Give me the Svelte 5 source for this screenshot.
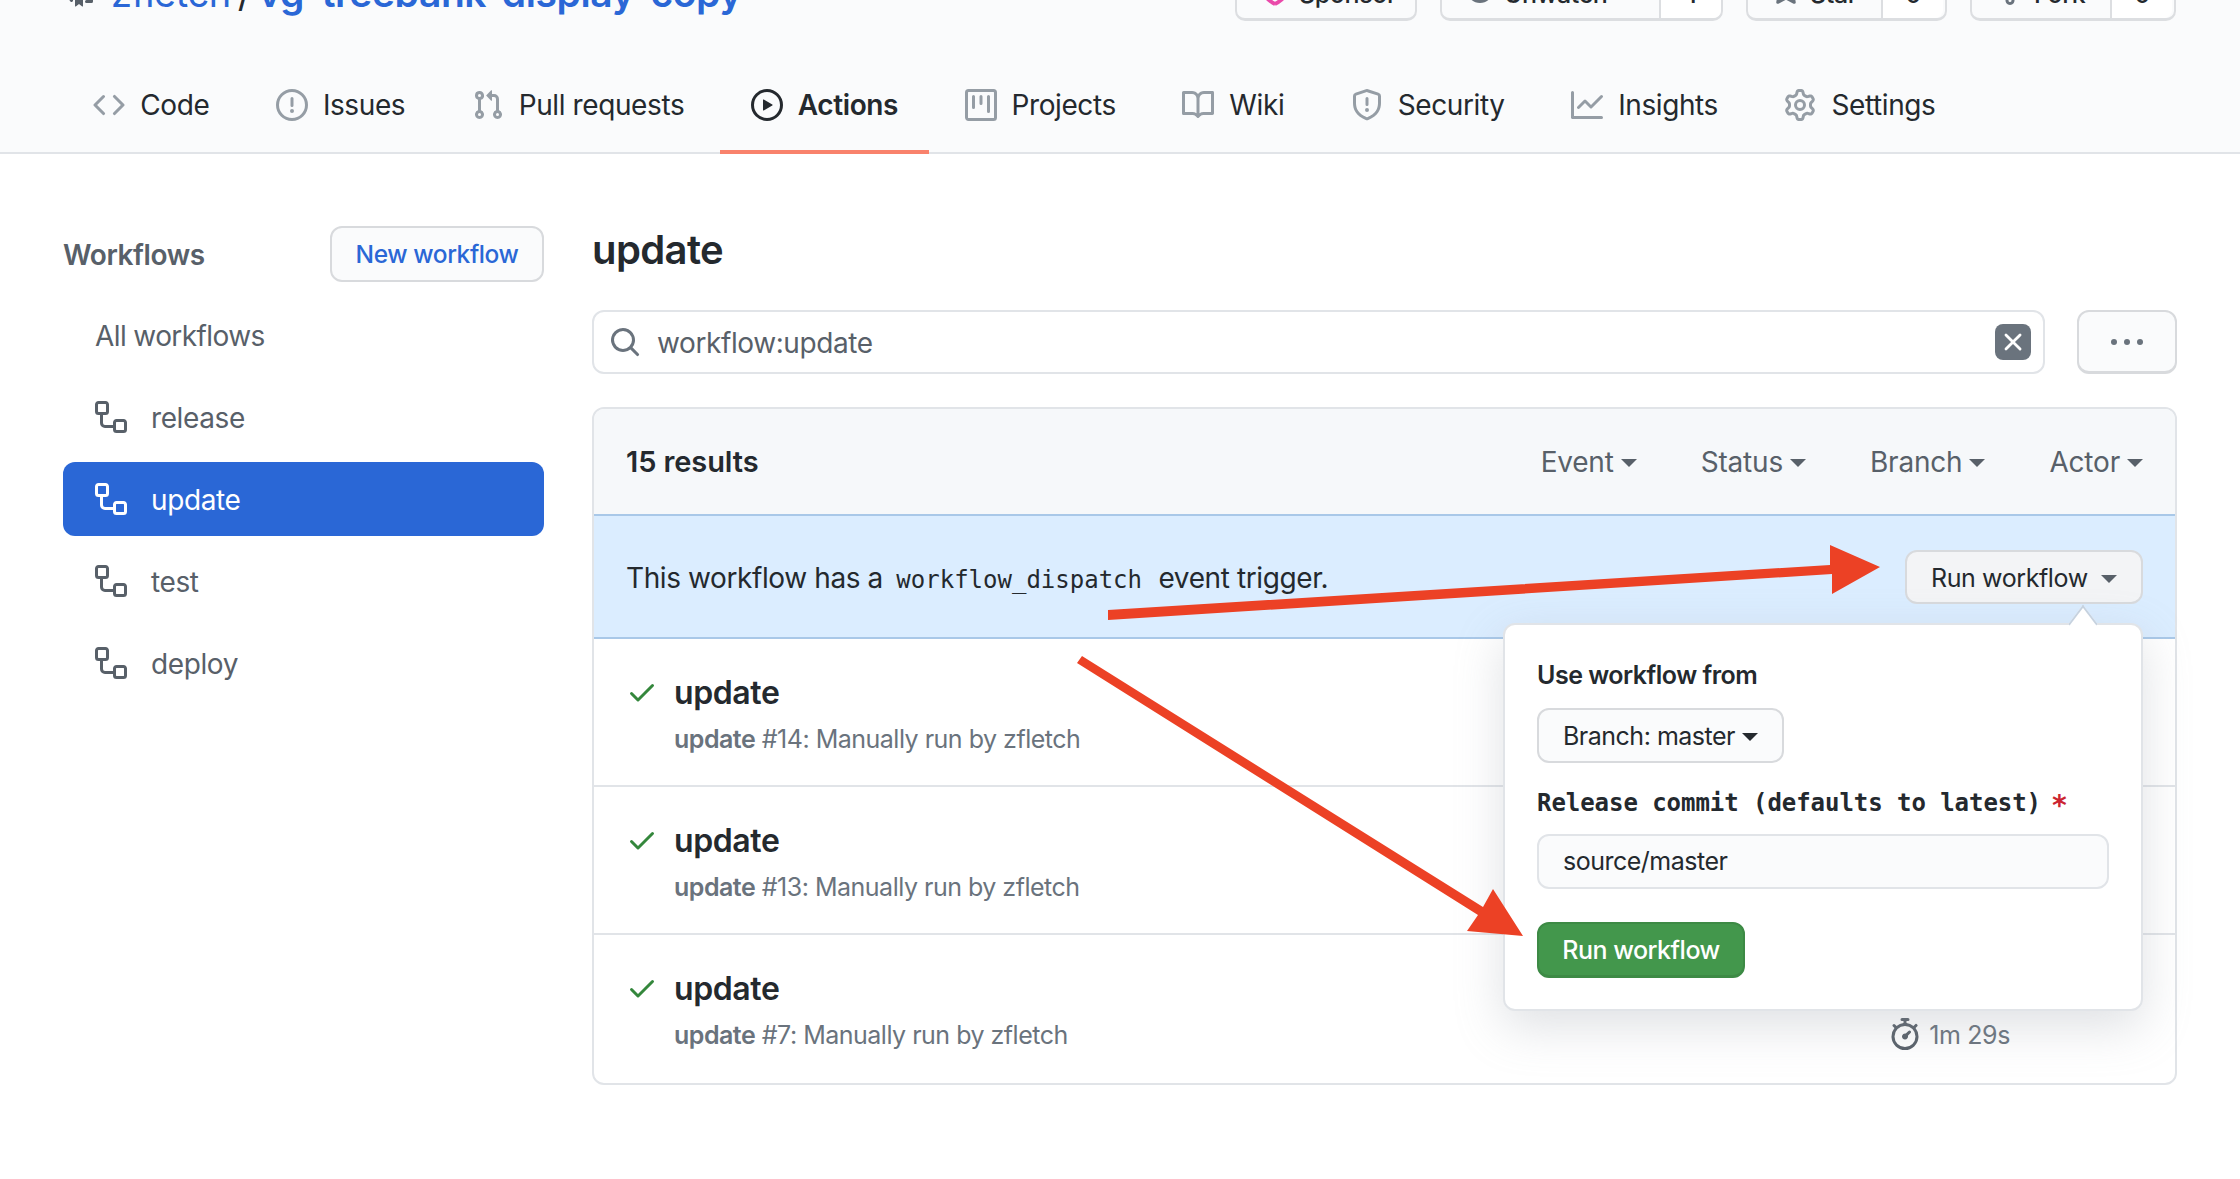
<script>
	const icons = {
		code: 'M4.72 3.22a.75.75 0 011.06 1.06L2.06 8l3.72 3.72a.75.75 0 11-1.06 1.06L.47 8.53a.75.75 0 010-1.06l4.25-4.25zm6.56 0a.75.75 0 10-1.06 1.06L13.94 8l-3.72 3.72a.75.75 0 101.06 1.06l4.25-4.25a.75.75 0 000-1.06l-4.25-4.25z',
		issue: 'M8 1.5a6.5 6.5 0 100 13 6.5 6.5 0 000-13zM0 8a8 8 0 1116 0A8 8 0 010 8zm9 3a1 1 0 11-2 0 1 1 0 012 0zm-.25-6.25a.75.75 0 00-1.5 0v3.5a.75.75 0 001.5 0v-3.5z',
		pull: 'M7.177 3.073L9.573.677A.25.25 0 0110 .854v4.792a.25.25 0 01-.427.177L7.177 3.427a.25.25 0 010-.354zM3.75 2.5a.75.75 0 100 1.5.75.75 0 000-1.5zm-2.25.75a2.25 2.25 0 113 2.122v5.256a2.251 2.251 0 11-1.5 0V5.372A2.25 2.25 0 011.5 3.25zM11 2.5h-1V4h1a1 1 0 011 1v5.628a2.251 2.251 0 101.5 0V5A2.5 2.5 0 0011 2.5zm1 10.25a.75.75 0 111.5 0 .75.75 0 01-1.5 0zM3.75 12a.75.75 0 100 1.5.75.75 0 000-1.5z',
		play: 'M1.5 8a6.5 6.5 0 1113 0 6.5 6.5 0 01-13 0zM8 0a8 8 0 100 16A8 8 0 008 0zM6.379 5.227A.25.25 0 006 5.442v5.117a.25.25 0 00.379.214l4.264-2.559a.25.25 0 000-.428L6.379 5.227z',
		project: 'M1.75 0A1.75 1.75 0 000 1.75v12.5C0 15.216.784 16 1.75 16h12.5A1.75 1.75 0 0016 14.25V1.75A1.75 1.75 0 0014.25 0H1.75zM1.5 1.75a.25.25 0 01.25-.25h12.5a.25.25 0 01.25.25v12.5a.25.25 0 01-.25.25H1.75a.25.25 0 01-.25-.25V1.75zM11.75 3a.75.75 0 00-.75.75v7.5a.75.75 0 001.5 0v-7.5a.75.75 0 00-.75-.75zm-8.25.75a.75.75 0 011.5 0v5.5a.75.75 0 01-1.5 0v-5.5zM8 3a.75.75 0 00-.75.75v3.5a.75.75 0 001.5 0v-3.5A.75.75 0 008 3z',
		book: 'M0 1.75A.75.75 0 01.75 1h4.253c1.227 0 2.317.59 3 1.501A3.744 3.744 0 0111.006 1h4.245a.75.75 0 01.75.75v10.5a.75.75 0 01-.75.75h-4.507a2.25 2.25 0 00-1.591.659l-.622.621a.75.75 0 01-1.06 0l-.622-.621A2.25 2.25 0 005.258 13H.75a.75.75 0 01-.75-.75V1.75zm8.755 3a2.25 2.25 0 012.25-2.25H14.5v9h-3.757c-.71 0-1.4.201-1.992.572l.004-7.322zm-1.504 7.324l.004-5.073-.002-2.253A2.25 2.25 0 005.003 2.5H1.5v9h3.757a3.75 3.75 0 011.994.574z',
		shield: 'M7.467.133a1.75 1.75 0 011.066 0l5.25 1.68A1.75 1.75 0 0115 3.48V7c0 1.566-.32 3.182-1.303 4.682-.983 1.498-2.585 2.813-5.032 3.855a1.7 1.7 0 01-1.33 0c-2.447-1.042-4.049-2.357-5.032-3.855C1.32 10.182 1 8.566 1 7V3.48a1.75 1.75 0 011.217-1.667l5.25-1.68zm.61 1.429a.25.25 0 00-.153 0l-5.25 1.68a.25.25 0 00-.174.238V7c0 1.358.275 2.666 1.057 3.86.784 1.194 2.121 2.34 4.366 3.297a.2.2 0 00.154 0c2.245-.956 3.582-2.104 4.366-3.298C13.225 9.666 13.5 8.36 13.5 7V3.48a.25.25 0 00-.174-.237l-5.25-1.68zM9 10.5a1 1 0 11-2 0 1 1 0 012 0zm-.25-5.75a.75.75 0 10-1.5 0v3a.75.75 0 001.5 0v-3z',
		graph: 'M1.5 1.75a.75.75 0 00-1.5 0v12.5c0 .414.336.75.75.75h14.5a.75.75 0 000-1.5H1.5V1.75zm14.28 2.53a.75.75 0 00-1.06-1.06L10 7.94 7.53 5.47a.75.75 0 00-1.06 0L3.22 8.72a.75.75 0 001.06 1.06L7 7.06l2.47 2.47a.75.75 0 001.06 0l5.25-5.25z',
		gear: 'M7.429 1.525a6.593 6.593 0 011.142 0c.036.003.108.036.137.146l.289 1.105c.147.56.55.967.997 1.189.174.086.341.183.501.29.417.278.97.423 1.53.27l1.102-.303c.11-.03.175.016.195.046.219.31.41.641.573.989.014.031.022.11-.059.19l-.815.806c-.411.406-.562.957-.53 1.456a4.588 4.588 0 010 .582c-.032.499.119 1.05.53 1.456l.815.806c.08.08.073.159.059.19a6.494 6.494 0 01-.573.99c-.02.029-.086.074-.195.045l-1.103-.303c-.559-.153-1.112-.008-1.529.27-.16.107-.327.204-.5.29-.449.222-.851.628-.998 1.189l-.289 1.105c-.029.11-.101.143-.137.146a6.613 6.613 0 01-1.142 0c-.036-.003-.108-.037-.137-.146l-.289-1.105c-.147-.56-.55-.967-.997-1.189a4.502 4.502 0 01-.501-.29c-.417-.278-.97-.423-1.53-.27l-1.102.303c-.11.03-.175-.016-.195-.046a6.492 6.492 0 01-.573-.989c-.014-.031-.022-.11.059-.19l.815-.806c.411-.406.562-.957.53-1.456a4.587 4.587 0 010-.582c.032-.499-.119-1.05-.53-1.456l-.815-.806c-.08-.08-.073-.159-.059-.19a6.44 6.44 0 01.573-.99c.02-.029.086-.075.195-.045l1.103.303c.559.153 1.112.008 1.529-.27.16-.107.327-.204.5-.29.449-.222.851-.628.998-1.189l.289-1.105c.029-.11.101-.143.137-.146zM8 0c-.236 0-.47.01-.701.03-.743.065-1.29.615-1.458 1.261l-.29 1.106c-.017.066-.078.158-.211.224a5.994 5.994 0 00-.668.386c-.123.082-.233.09-.3.071L3.27 2.776c-.644-.177-1.392.02-1.82.63a7.977 7.977 0 00-.704 1.217c-.315.675-.111 1.422.363 1.891l.815.806c.05.048.098.147.088.294a6.084 6.084 0 000 .772c.01.147-.038.246-.088.294l-.815.806c-.474.469-.678 1.216-.363 1.891.2.428.436.835.704 1.218.428.609 1.176.806 1.82.63l1.103-.303c.066-.019.176-.011.299.071.213.143.436.272.668.386.133.066.194.158.212.224l.289 1.106c.169.646.715 1.196 1.458 1.26a8.094 8.094 0 001.402 0c.743-.064 1.29-.614 1.458-1.26l.29-1.106c.017-.066.078-.158.211-.224a5.98 5.98 0 00.668-.386c.123-.082.233-.09.3-.071l1.102.302c.644.177 1.392-.02 1.82-.63.268-.382.505-.789.704-1.217.315-.675.111-1.422-.364-1.891l-.814-.806c-.05-.048-.098-.147-.088-.294a6.1 6.1 0 000-.772c-.01-.147.039-.246.088-.294l.814-.806c.475-.469.679-1.216.364-1.891a7.992 7.992 0 00-.704-1.218c-.428-.609-1.176-.806-1.82-.63l-1.103.303c-.066.019-.176.011-.299-.071a5.991 5.991 0 00-.668-.386c-.133-.066-.194-.158-.212-.224L10.16 1.29C9.99.645 9.444.095 8.701.031A8.094 8.094 0 008 0zm1.5 8a1.5 1.5 0 11-3 0 1.5 1.5 0 013 0zM11 8a3 3 0 11-6 0 3 3 0 016 0z',
		workflow: 'M0 1.75C0 .784.784 0 1.75 0h3.5C6.216 0 7 .784 7 1.75v3.5A1.75 1.75 0 015.25 7H4v4a1 1 0 001 1h4v-1.25C9 9.784 9.784 9 10.75 9h3.5c.966 0 1.75.784 1.75 1.75v3.5A1.75 1.75 0 0114.25 16h-3.5A1.75 1.75 0 019 14.25V13.5H5A2.5 2.5 0 012.5 11V7H1.75A1.75 1.75 0 010 5.25v-3.5zm1.75-.25a.25.25 0 00-.25.25v3.5c0 .138.112.25.25.25h3.5a.25.25 0 00.25-.25v-3.5a.25.25 0 00-.25-.25h-3.5zm9 9a.25.25 0 00-.25.25v3.5c0 .138.112.25.25.25h3.5a.25.25 0 00.25-.25v-3.5a.25.25 0 00-.25-.25h-3.5z',
		check: 'M13.78 4.22a.75.75 0 010 1.06l-7.25 7.25a.75.75 0 01-1.06 0L2.22 9.28a.75.75 0 011.06-1.06L6 10.94l6.72-6.72a.75.75 0 011.06 0z',
		search: 'M11.5 7a4.499 4.499 0 11-8.998 0A4.499 4.499 0 0111.5 7zm-.82 4.74a6 6 0 111.06-1.06l3.04 3.04a.75.75 0 11-1.06 1.06l-3.04-3.04z',
		stopwatch: 'M5.75.75A.75.75 0 016.5 0h3a.75.75 0 010 1.5h-.75v1l-.001.041a6.718 6.718 0 013.464 1.435l.007-.006.75-.75a.75.75 0 111.06 1.06l-.75.75-.006.007a6.75 6.75 0 11-10.548 0L2.72 5.03l-.75-.75a.75.75 0 011.06-1.06l.75.75.007.006A6.718 6.718 0 017.25 2.541a.756.756 0 010-.041v-1H6.5a.75.75 0 01-.75-.75zM8 14.5A5.25 5.25 0 108 4a5.25 5.25 0 000 10.5zm.389-6.7l1.33-1.33a.75.75 0 111.061 1.06L9.45 8.861A1.502 1.502 0 018 10.75a1.5 1.5 0 11.389-2.95z',
		star: 'M8 .25a.75.75 0 01.673.418l1.882 3.815 4.21.612a.75.75 0 01.416 1.279l-3.046 2.97.719 4.192a.75.75 0 01-1.088.791L8 12.347l-3.766 1.98a.75.75 0 01-1.088-.79l.72-4.194L.818 6.374a.75.75 0 01.416-1.28l4.21-.611L7.327.668A.75.75 0 018 .25zm0 2.445L6.615 5.5a.75.75 0 01-.564.41l-3.097.45 2.24 2.184a.75.75 0 01.216.664l-.528 3.084 2.769-1.456a.75.75 0 01.698 0l2.77 1.456-.53-3.084a.75.75 0 01.216-.664l2.24-2.183-3.096-.45a.75.75 0 01-.564-.41L8 2.694v.001z',
		repo: 'M2 2.5A2.5 2.5 0 014.5 0h8.75a.75.75 0 01.75.75v12.5a.75.75 0 01-.75.75h-2.5a.75.75 0 110-1.5h1.75v-2h-8a1 1 0 00-.714 1.7.75.75 0 01-1.072 1.05A2.495 2.495 0 012 11.5v-9zm10.5-1V9h-8c-.356 0-.694.074-1 .208V2.5a1 1 0 011-1h8zM5 12.25v3.25a.25.25 0 00.4.2l1.45-1.087a.25.25 0 01.3 0L8.6 15.7a.25.25 0 00.4-.2v-3.25a.25.25 0 00-.25-.25h-3.5a.25.25 0 00-.25.25z',
		x: 'M3.72 3.72a.75.75 0 011.06 0L8 6.94l3.22-3.22a.75.75 0 111.06 1.06L9.06 8l3.22 3.22a.75.75 0 11-1.06 1.06L8 9.06l-3.22 3.22a.75.75 0 01-1.06-1.06L6.94 8 3.72 4.78a.75.75 0 010-1.06z',
		heart: 'M4.25 2.5c-1.336 0-2.75 1.164-2.75 3 0 2.15 1.58 4.144 3.365 5.682A20.565 20.565 0 008 13.393a20.561 20.561 0 003.135-2.211C12.92 9.644 14.5 7.65 14.5 5.5c0-1.836-1.414-3-2.75-3-1.373 0-2.609.986-3.029 2.456a.75.75 0 01-1.442 0C6.859 3.486 5.623 2.5 4.25 2.5zM8 14.75l-.345.666-.002-.001-.006-.003-.018-.01a7.643 7.643 0 01-.31-.17 22.075 22.075 0 01-3.434-2.414C2.045 11.15 0 8.731 0 5.5 0 2.836 2.086 1 4.25 1 5.797 1 7.153 1.802 8 3.02 8.847 1.802 10.203 1 11.75 1 13.914 1 16 2.836 16 5.5c0 3.231-2.045 5.65-3.885 7.318a22.08 22.08 0 01-3.744 2.584l-.018.01-.006.003h-.002L8 14.75z',
		eye: 'M1.679 7.932c.412-.621 1.242-1.75 2.366-2.717C5.175 4.242 6.527 3.5 8 3.5c1.473 0 2.824.742 3.955 1.715 1.124.967 1.954 2.096 2.366 2.717a.119.119 0 010 .136c-.412.621-1.242 1.75-2.366 2.717C10.825 11.758 9.473 12.5 8 12.5c-1.473 0-2.824-.742-3.955-1.715C2.92 9.818 2.09 8.69 1.679 8.068a.119.119 0 010-.136zM8 2c-1.981 0-3.67.992-4.933 2.078C1.797 5.169.88 6.423.43 7.1a1.619 1.619 0 000 1.798c.45.678 1.367 1.932 2.637 3.024C4.329 13.008 6.019 14 8 14c1.981 0 3.67-.992 4.933-2.078 1.27-1.091 2.187-2.345 2.637-3.023a1.619 1.619 0 000-1.798c-.45-.678-1.367-1.932-2.637-3.023C11.671 2.992 9.981 2 8 2z',
		fork: 'M5 3.25a.75.75 0 11-1.5 0 .75.75 0 011.5 0zm0 2.122a2.25 2.25 0 10-1.5 0v.878A2.25 2.25 0 005.75 8.5h1.5v2.128a2.251 2.251 0 101.5 0V8.5h1.5a2.25 2.25 0 002.25-2.25v-.878a2.25 2.25 0 10-1.5 0v.878a.75.75 0 01-.75.75h-4.5A.75.75 0 015 6.25v-.878zm3.75 7.378a.75.75 0 11-1.5 0 .75.75 0 011.5 0zm3-8.75a.75.75 0 100-1.5.75.75 0 000 1.5z'
	};

	const tabs = [
		{ label: 'Code', icon: 'code' },
		{ label: 'Issues', icon: 'issue' },
		{ label: 'Pull requests', icon: 'pull' },
		{ label: 'Actions', icon: 'play', active: true },
		{ label: 'Projects', icon: 'project' },
		{ label: 'Wiki', icon: 'book' },
		{ label: 'Security', icon: 'shield' },
		{ label: 'Insights', icon: 'graph' },
		{ label: 'Settings', icon: 'gear' }
	];

	const workflows = [
		{ name: 'release' },
		{ name: 'update', active: true },
		{ name: 'test' },
		{ name: 'deploy' }
	];

	const runs = [
		{ number: 14 },
		{ number: 13 },
		{ number: 7, time: '1m 29s' }
	];

	const filters = ['Event', 'Status', 'Branch', 'Actor'];
</script>

{#snippet icon(name, size = 32)}
	<svg class="icon" width={size} height={size} viewBox="0 0 16 16" fill="currentColor" aria-hidden="true">
		<path fill-rule="evenodd" d={icons[name]} />
	</svg>
{/snippet}

<div class="page">
	<header class="head">
		<div class="repo-head">
			<h1 class="repo-title">
				<span class="repo-icon">{@render icon('repo')}</span>
				<a href="#owner" class="repo-owner">zfletch</a>
				<span class="slash">/</span>
				<a href="#repo" class="repo-name">vg-treebank-display-copy</a>
			</h1>
			<div class="repo-actions">
				<div class="action sponsor">
					<span class="action-main"><span class="pink">{@render icon('heart')}</span>Sponsor</span>
				</div>
				<div class="action watch">
					<span class="action-main">{@render icon('eye')}Unwatch<i class="caret small"></i></span>
					<span class="count">1</span>
				</div>
				<div class="action star">
					<span class="action-main">{@render icon('star')}Star</span>
					<span class="count">0</span>
				</div>
				<div class="action fork">
					<span class="action-main">{@render icon('fork')}Fork</span>
					<span class="count">0</span>
				</div>
			</div>
		</div>
		<nav class="tabs">
			{#each tabs as tab}
				<a href="#tab" class="tab" class:active={tab.active}>
					{@render icon(tab.icon)}
					<span>{tab.label}</span>
				</a>
			{/each}
		</nav>
	</header>

	<div class="layout">
		<aside class="sidebar">
			<div class="side-head">
				<h3>Workflows</h3>
				<button type="button" class="btn new">New workflow</button>
			</div>
			<ul class="side-list">
				<li class="side-item all"><span>All workflows</span></li>
				{#each workflows as flow}
					<li class="side-item" class:selected={flow.active}>
						{@render icon('workflow')}
						<span>{flow.name}</span>
					</li>
				{/each}
			</ul>
		</aside>

		<main class="content">
			<h2 class="title">update</h2>

			<div class="search-row">
				<div class="search">
					<span class="search-icon">{@render icon('search')}</span>
					<span class="query">workflow:update</span>
					<span class="clear">{@render icon('x', 30)}</span>
				</div>
				<button type="button" class="btn more" aria-label="More">
					<i></i><i></i><i></i>
				</button>
			</div>

			<section class="box">
				<div class="box-head">
					<strong>15 results</strong>
					<div class="filters">
						{#each filters as filter}
							<span class="filter">{filter}<i class="caret"></i></span>
						{/each}
					</div>
				</div>

				<div class="band">
					<p>This workflow has a <code>workflow_dispatch</code> event trigger.</p>
					<button type="button" class="btn run">Run workflow<i class="caret dark"></i></button>

					<div class="popover">
						<div class="pop-label">Use workflow from</div>
						<button type="button" class="btn branch">Branch: master<i class="caret black"></i></button>
						<div class="pop-field">Release commit (defaults to latest)<span class="req">*</span></div>
						<div class="input">source/master</div>
						<button type="button" class="btn green">Run workflow</button>
					</div>
				</div>

				{#each runs as run}
					<div class="row">
						<span class="check">{@render icon('check')}</span>
						<div class="row-text">
							<div class="row-title">update</div>
							<div class="row-sub"><b>update</b> #{run.number}: Manually run by zfletch</div>
						</div>
						{#if run.time}
							<div class="row-time">{@render icon('stopwatch')}<span>{run.time}</span></div>
						{/if}
					</div>
				{/each}
			</section>
		</main>
	</div>

	<svg class="arrows" width="2240" height="1179" viewBox="0 0 2240 1179" aria-hidden="true">
		<polygon points="1108,610 1830,565 1830,545 1880,567 1832,594 1832,574 1108,620" fill="#ec4125" />
		<polygon points="1082,656 1483,907 1493,889 1523,936 1467,931 1478,915 1077,663" fill="#ec4125" />
	</svg>
</div>

<style>
	:global(body) {
		margin: 0;
		background: #fff;
	}

	.page {
		position: relative;
		height: 1179px;
		overflow: hidden;
		font-family: Inter, 'Liberation Sans', sans-serif;
		font-size: 28px;
		letter-spacing: -0.4px;
		color: #24292e;
	}

	.icon {
		display: block;
		flex: none;
	}

	a {
		color: inherit;
		text-decoration: none;
	}

	.head {
		background: #fafbfc;
		border-bottom: 2px solid #e1e4e8;
		padding-top: 1px;
	}

	.repo-head {
		display: flex;
		justify-content: space-between;
		margin-top: -40px;
		height: 60px;
		padding: 0 64px 0 65px;
	}

	.repo-title {
		display: flex;
		align-items: center;
		margin: 0;
		padding-top: 3px;
		font-size: 38px;
		font-weight: 400;
		color: #2a67d6;
	}

	.repo-icon {
		color: #586069;
		margin: 0 14px 3px 0;
	}

	.repo-name {
		font-size: 39px;
		font-weight: 600;
	}

	.slash {
		color: #24292e;
		margin: 0 7px;
	}

	.repo-actions {
		display: flex;
		gap: 23px;
	}

	.action {
		display: flex;
		height: 60px;
		box-sizing: border-box;
		border: 2px solid #dcdee1;
		border-bottom-width: 3px;
		border-radius: 10px;
		background: #fafbfc;
		font-size: 25px;
		font-weight: 500;
		align-items: center;
	}

	.action-main {
		display: flex;
		align-items: center;
		gap: 8px;
		padding: 6px 0 0 22px;
		height: 100%;
		box-sizing: border-box;
		color: #24292e;
	}

	.action-main .icon {
		color: #6a737d;
		margin-bottom: 6px;
	}

	.pink .icon {
		color: #ea4aaa;
	}

	.small {
		margin-left: 12px;
		border-width: 6px;
		border-bottom-width: 0;
		color: #959da5;
	}

	.count {
		display: flex;
		align-items: center;
		justify-content: center;
		height: 100%;
		padding-top: 6px;
		box-sizing: border-box;
		background: #fff;
		border-left: 2px solid #dcdee1;
		border-radius: 0 8px 8px 0;
		width: 62px;
	}

	.sponsor {
		width: 182px;
	}

	.watch {
		width: 283px;
	}

	.watch .action-main {
		width: 218px;
	}

	.star {
		width: 201px;
	}

	.star .action-main {
		width: 133px;
	}

	.fork {
		width: 206px;
	}

	.fork .action-main {
		width: 138px;
	}

	.tabs {
		display: flex;
		margin: 39px 0 -2px;
		padding-left: 60px;
	}

	.tab {
		display: flex;
		align-items: center;
		gap: 15px;
		height: 94px;
		box-sizing: border-box;
		padding: 0 33.25px;
		border-bottom: 4px solid transparent;
		color: #24292e;
	}

	.tab .icon {
		color: #959da5;
	}

	.tab.active {
		margin: 0 2px;
		padding: 0 31.25px;
		font-weight: 600;
		border-bottom-color: #f9826c;
	}

	.tab.active .icon {
		color: #24292e;
	}

	.layout {
		display: flex;
		gap: 48px;
		padding: 69px 63px 0;
	}

	.sidebar {
		flex: none;
		width: 481px;
		padding-top: 3px;
	}

	.side-head {
		display: flex;
		align-items: center;
		justify-content: space-between;
	}

	.side-head h3 {
		margin: 0;
		padding-top: 2px;
		font-size: 28px;
		font-weight: 600;
		color: #586069;
	}

	.btn {
		font: inherit;
		letter-spacing: inherit;
		box-sizing: border-box;
		border: 2px solid #d8dadd;
		border-radius: 12px;
		background: #fafbfc;
		padding: 0;
	}

	.new {
		width: 214px;
		height: 56px;
		font-size: 24.5px;
		font-weight: 500;
		color: #2a67d6;
	}

	.side-list {
		list-style: none;
		margin: 16px 0 0;
		padding: 0;
		display: grid;
		gap: 8px;
	}

	.side-item {
		display: flex;
		align-items: center;
		gap: 24px;
		height: 74px;
		padding-left: 32px;
		border-radius: 12px;
		color: #586069;
	}

	.side-item span {
		padding-top: 2px;
	}

	.all {
		letter-spacing: -0.6px;
	}

	.side-item.selected {
		background: #2a67d6;
		color: #fff;
	}

	.content {
		flex: none;
		width: 1585px;
	}

	.title {
		margin: 0;
		height: 54px;
		line-height: 54px;
		font-size: 40px;
		font-weight: 600;
		letter-spacing: -0.6px;
	}

	.search-row {
		display: flex;
		gap: 32px;
		margin-top: 33px;
	}

	.search {
		flex: 1;
		display: flex;
		align-items: center;
		height: 64px;
		box-sizing: border-box;
		border: 2px solid #e1e4e8;
		border-radius: 12px;
		padding: 0 12px 0 15px;
		color: #586069;
	}

	.search-icon {
		color: #6a737d;
		margin-right: 16px;
	}

	.query {
		flex: 1;
		padding-top: 2px;
	}

	.clear {
		display: flex;
		align-items: center;
		justify-content: center;
		width: 36px;
		height: 36px;
		border-radius: 8px;
		background: #6a737d;
		color: #fff;
	}

	.more {
		flex: none;
		display: flex;
		align-items: center;
		justify-content: center;
		gap: 7px;
		width: 100px;
		height: 64px;
		border-bottom-width: 3px;
	}

	.more i {
		width: 6px;
		height: 6px;
		border-radius: 50%;
		background: #6a737d;
	}

	.box {
		margin-top: 33px;
		border: 2px solid #e1e4e8;
		border-radius: 12px;
	}

	.box-head {
		display: flex;
		align-items: center;
		justify-content: space-between;
		height: 105px;
		padding: 1px 32px 0;
		box-sizing: border-box;
		background: #f6f8fa;
		border-radius: 10px 10px 0 0;
	}

	.box-head strong {
		margin-bottom: 2px;
		font-size: 29px;
		font-weight: 600;
		letter-spacing: -0.1px;
	}

	.filters {
		display: flex;
		gap: 64px;
		letter-spacing: -0.2px;
		color: #586069;
	}

	.filter {
		display: flex;
		align-items: center;
		gap: 7px;
	}

	.caret {
		display: inline-block;
		width: 0;
		height: 0;
		border: 8px solid transparent;
		border-top-color: currentColor;
		border-bottom-width: 0;
		margin-top: 2px;
	}

	.band {
		position: relative;
		display: flex;
		align-items: center;
		justify-content: space-between;
		height: 121px;
		padding: 0 32px;
		background: #dbedff;
		border-top: 2px solid #a9c8e8;
		border-bottom: 2px solid #a9c8e8;
	}

	.band p {
		margin: 0;
		padding-top: 3px;
	}

	code {
		font-family: 'DejaVu Sans Mono', monospace;
		font-size: 24px;
		letter-spacing: 0;
		margin: 0 9px 0 6px;
	}

	.run {
		display: flex;
		align-items: center;
		justify-content: space-between;
		width: 238px;
		height: 54px;
		padding: 2px 24px 0 24px;
		background: #f3f4f6;
		font-size: 25px;
		color: #24292e;
	}

	.dark {
		color: #586069;
	}

	.popover {
		position: absolute;
		top: 107px;
		right: 32px;
		width: 640px;
		box-sizing: border-box;
		padding: 32px 32px 31px;
		background: #fff;
		border: 2px solid #e1e4e8;
		border-radius: 12px;
		box-shadow: 0 16px 48px rgba(149, 157, 165, 0.3);
		font-size: 25px;
		letter-spacing: -0.5px;
	}

	.popover::before {
		content: '';
		position: absolute;
		top: -13px;
		right: 46px;
		width: 22px;
		height: 22px;
		background: #fff;
		border-left: 2px solid #c6d2df;
		border-top: 2px solid #c6d2df;
		transform: rotate(45deg) skew(8deg, 8deg);
	}

	.pop-label {
		line-height: 36px;
		font-weight: 600;
	}

	.branch {
		display: flex;
		align-items: center;
		gap: 7px;
		margin-top: 15px;
		height: 55px;
		padding: 0 24px;
		font-size: 25px;
		color: #24292e;
	}

	.black {
		border-width: 8px;
		border-bottom-width: 0;
		color: #24292e;
	}

	.pop-field {
		margin-top: 22px;
		height: 36px;
		line-height: 36px;
		font-family: 'DejaVu Sans Mono', monospace;
		font-size: 24px;
		font-weight: 700;
		letter-spacing: -0.05px;
	}

	.req {
		margin-left: 10px;
		font-size: 28px;
		vertical-align: -4px;
		color: #cb2431;
	}

	.input {
		display: flex;
		align-items: center;
		margin-top: 13px;
		height: 55px;
		box-sizing: border-box;
		padding: 0 24px;
		border: 2px solid #e1e4e8;
		border-radius: 12px;
		background: #fafbfc;
		line-height: 1;
	}

	.green {
		display: block;
		margin-top: 33px;
		width: 208px;
		height: 56px;
		background: #43974c;
		border-color: #3d8a45;
		border-bottom-width: 3px;
		font-size: 25px;
		font-weight: 500;
		color: #fff;
	}

	.row {
		display: flex;
		height: 148px;
		box-sizing: border-box;
		padding: 34px 165px 0 32px;
		border-bottom: 2px solid #e1e4e8;
	}

	.row:last-child {
		border-bottom: 0;
	}

	.check {
		color: #34873c;
		margin: 3px 16px 0 0;
	}

	.row-text {
		flex: 1;
	}

	.row-title {
		font-size: 32px;
		line-height: 40px;
		font-weight: 600;
	}

	.row-sub {
		margin-top: 8px;
		line-height: 36px;
		font-size: 25px;
		letter-spacing: -0.5px;
		color: #6a737d;
	}

	.row-sub b {
		font-weight: 600;
	}

	.row-time {
		display: flex;
		align-items: center;
		gap: 8px;
		margin-top: 48px;
		height: 36px;
		font-size: 25px;
		color: #6a737d;
	}

	.row-time .icon {
		color: #586069;
		margin-bottom: 2px;
	}

	.arrows {
		position: absolute;
		top: 0;
		left: 0;
		pointer-events: none;
	}
</style>
